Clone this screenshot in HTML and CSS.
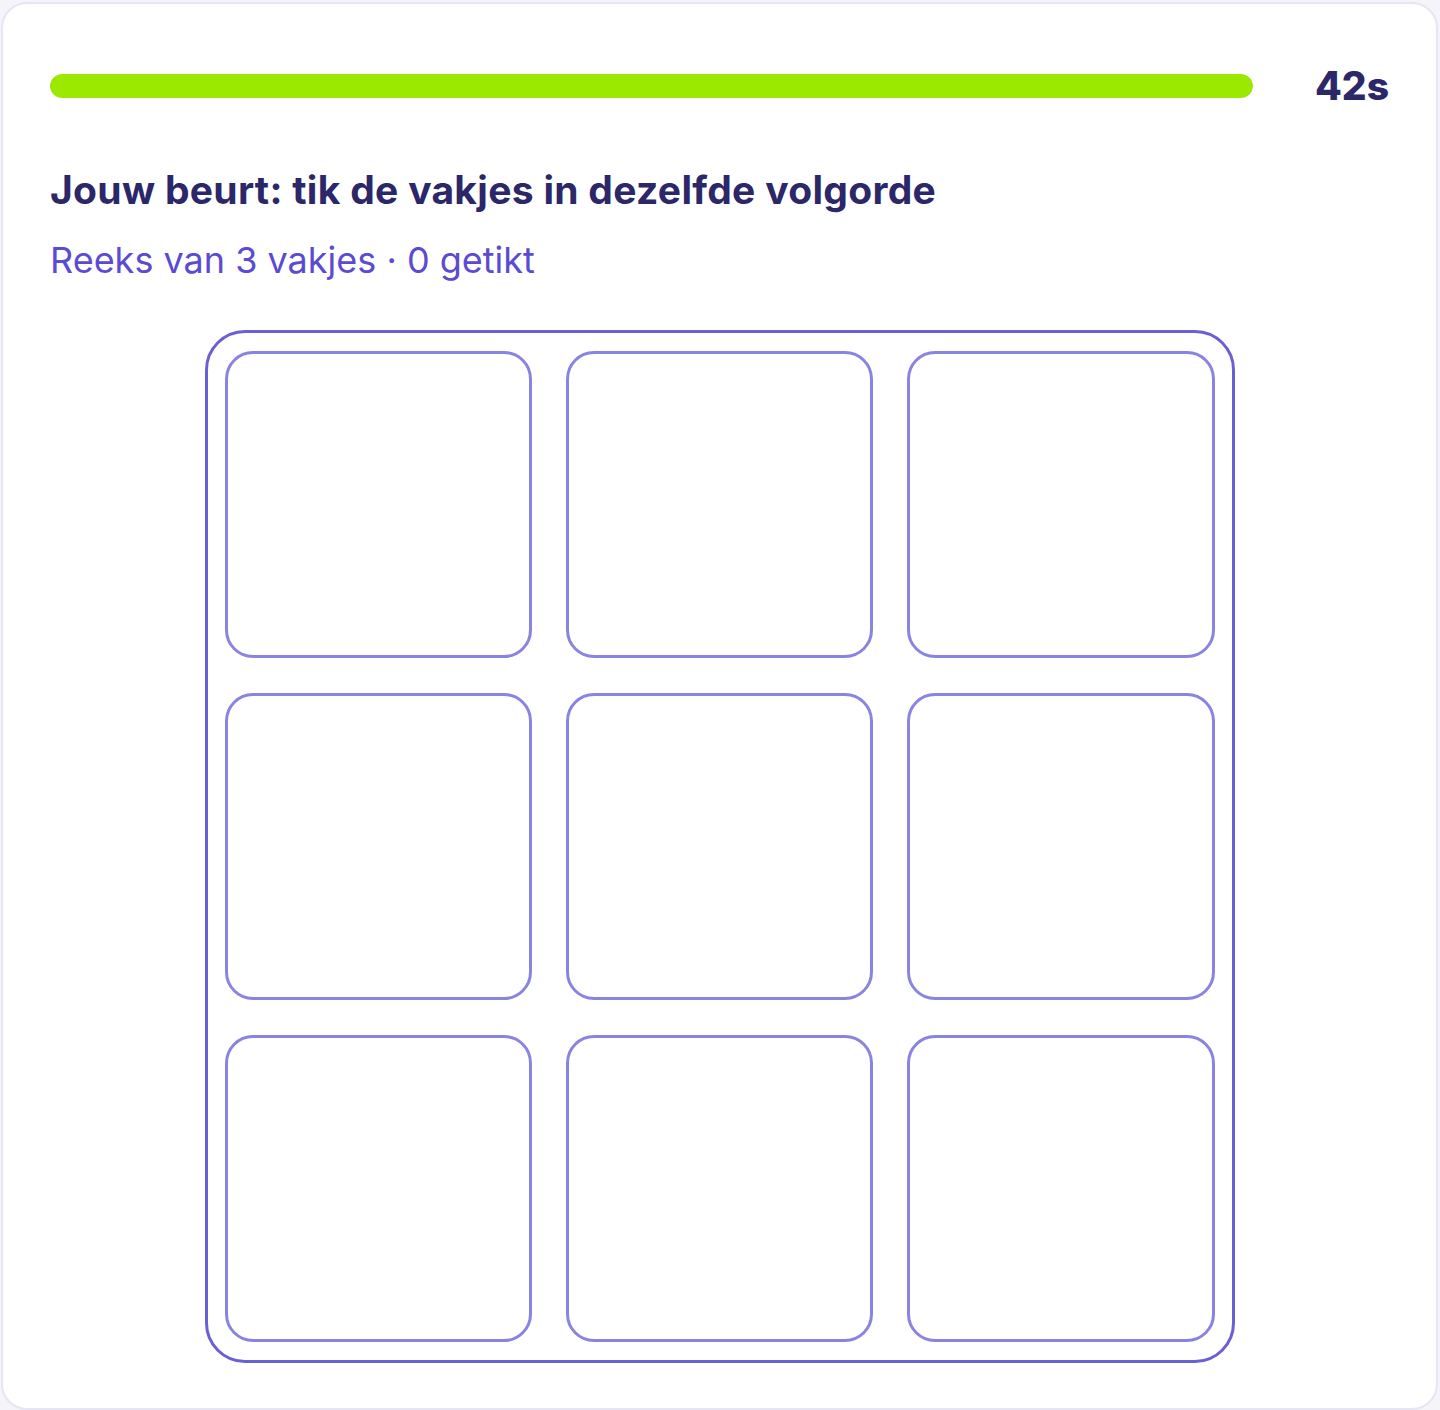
FILE: index.html
```html
<!DOCTYPE html>
<html lang="nl">
<head>
<meta charset="utf-8">
<title>Geheugenspel</title>
<link rel="stylesheet" href="styles.css">
</head>
<body>
<main class="card">
  <div class="timer-row">
    <div class="bar"><div class="bar-fill" style="width:100%"></div></div>
    <div class="timer">42s</div>
  </div>
  <h1 class="title">Jouw beurt: tik de vakjes in dezelfde volgorde</h1>
  <p class="sub">Reeks van 3 vakjes · 0 getikt</p>
  <div class="board">
    <div class="grid">
      <button class="cell"></button>
      <button class="cell"></button>
      <button class="cell"></button>
      <button class="cell"></button>
      <button class="cell"></button>
      <button class="cell"></button>
      <button class="cell"></button>
      <button class="cell"></button>
      <button class="cell"></button>
    </div>
  </div>
</main>
</body>
</html>
```

FILE: styles.css
```css
* { box-sizing: border-box; }
html, body { margin: 0; padding: 0; }
body {
  background: #f5f5f9;
  font-family: Inter, "Noto Sans", sans-serif;
  padding: 2px 2px 2px 1px;
}
.card {
  background: #ffffff;
  border: 2px solid #e5e5f6;
  border-radius: 26px;
  padding: 56px 47px 45px 47px;
}
.timer-row {
  display: flex;
  align-items: center;
  gap: 62px;
  height: 52px;
}
.bar {
  flex: 1;
  height: 24px;
  border-radius: 12px;
  background: #ecebf8;
  overflow: hidden;
}
.bar-fill {
  height: 100%;
  background: #9be800;
  border-radius: 12px;
}
.timer {
  font-family: Inter, sans-serif;
  font-weight: 800;
  font-size: 39px;
  line-height: 52px;
  color: #2b2768;
}
.title {
  margin: 56px 0 0 0;
  font-size: 39px;
  line-height: 44px;
  font-weight: 700;
  letter-spacing: 0.3px;
  color: #2b2768;
}
.sub {
  margin: 26px 0 0 0;
  font-size: 36px;
  line-height: 44px;
  font-weight: 400;
  color: #5b4bd1;
}
.board {
  width: 1030px;
  margin: 48px auto 0 auto;
  border: 3px solid #6b5fd6;
  border-radius: 40px;
  padding: 18px 17px;
}
.grid {
  display: grid;
  grid-template-columns: repeat(3, 1fr);
  gap: 35px 34px;
}
.cell {
  display: block;
  height: 307px;
  background: #ffffff;
  border: 3px solid #8a84e1;
  border-radius: 28px;
  padding: 0;
  margin: 0;
  cursor: pointer;
}
```
